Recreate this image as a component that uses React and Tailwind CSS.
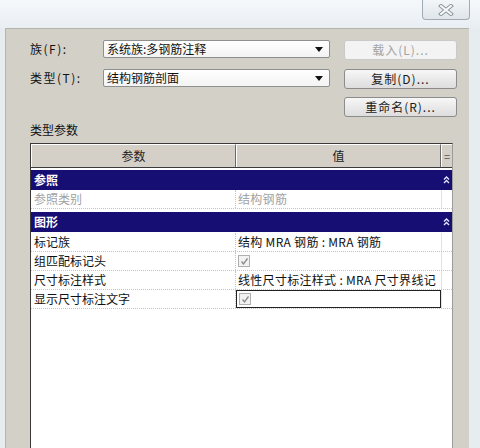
const FONT = { fontFamily: '"Noto Sans CJK SC", "Liberation Sans", sans-serif' };

function Arrow() {
  return (
    <svg width="8" height="5" viewBox="0 0 8 5" className="shrink-0">
      <path d="M0 0 L8 0 L4 5 Z" fill="#111" />
    </svg>
  );
}

function Combo({ text }) {
  return (
    <div className="w-[227px] h-[18px] border border-[#8e8f8f] rounded-[2px] bg-gradient-to-b from-[#ffffff] to-[#f3f3f3] flex items-center pl-[3px] pr-[6px]">
      <span className="flex-1 text-[12px] leading-none text-[#111]">{text}</span>
      <Arrow />
    </div>
  );
}

function Btn({ children, disabled }) {
  return (
    <div
      className={
        disabled
          ? "w-[113px] h-[20px] border border-[#c9c9c9] rounded-[3px] bg-[#f3f3f3] flex items-center justify-center text-[12px] tracking-[1px] text-[#a3a3a3] leading-none"
          : "w-[113px] h-[20px] border border-[#8c8c8c] rounded-[3px] bg-gradient-to-b from-[#f7f7f7] to-[#dddddd] flex items-center justify-center text-[12px] tracking-[1px] text-[#1a1a1a] leading-none"
      }
    >
      {children}
    </div>
  );
}

function Chevrons() {
  return (
    <svg width="7" height="8" viewBox="0 0 7 8">
      <path d="M1 3.5 L3.5 1 L6 3.5" stroke="#e8e8ff" strokeWidth="1.3" fill="none" />
      <path d="M1 7 L3.5 4.5 L6 7" stroke="#e8e8ff" strokeWidth="1.3" fill="none" />
    </svg>
  );
}

function Check() {
  return (
    <div className="w-[12px] h-[12px] border border-[#b0b0b0] bg-[#f2f2f2] flex items-center justify-center">
      <svg width="9" height="9" viewBox="0 0 9 9">
        <path d="M1.5 4.5 L3.5 7 L7.5 1.5" stroke="#8a8a8a" strokeWidth="1.3" fill="none" />
      </svg>
    </div>
  );
}

function Band({ label, className = "" }) {
  return (
    <div className={"h-[20px] bg-[#160e72] flex items-center " + className}>
      <span className="flex-1 pl-[3px] text-[12px] font-bold text-white leading-none">{label}</span>
      <div className="w-[12px] flex justify-center">
        <Chevrons />
      </div>
    </div>
  );
}

function Row({ name, value, gray, selected }) {
  return (
    <div className="h-[19px] flex border-b border-dotted border-[#c4c4c4] bg-white">
      <div
        className={
          "w-[205px] flex items-center pl-[3px] text-[12px] leading-none border-r border-dotted border-[#c4c4c4] " +
          (gray ? "text-[#a2a2a2]" : "text-[#111]")
        }
      >
        {name}
      </div>
      <div
        className={
          "w-[205px] flex items-center pl-[2px] text-[12px] tracking-[0.3px] leading-none whitespace-nowrap overflow-hidden " +
          (gray ? "text-[#a2a2a2] " : "text-[#111] ") +
          (selected ? "border border-[#222]" : "")
        }
      >
        {value}
      </div>
      <div className="flex-1 border-l border-[#e2e2e2]" />
    </div>
  );
}

export default function App() {
  return (
    <div className="w-[480px] h-[448px] overflow-hidden bg-[#e7ecf1] flex flex-col" style={FONT}>
      {/* title bar */}
      <div className="h-[28px] shrink-0 flex bg-gradient-to-b from-[#f5f8fb] to-[#e9eef3]">
        <div className="ml-auto mr-[10px] w-[48px] h-[20px] border border-t-0 border-[#a2abb4] rounded-b-[4px] bg-gradient-to-b from-[#f3f6f9] to-[#dfe5ea] flex items-center justify-center">
          <svg width="16" height="12" viewBox="0 0 16 12">
            <path d="M3 2 L13 10 M13 2 L3 10" stroke="#8b949c" strokeWidth="4" strokeLinecap="square" />
            <path d="M3 2 L13 10 M13 2 L3 10" stroke="#f7f9fb" strokeWidth="2" strokeLinecap="square" />
          </svg>
        </div>
      </div>

      {/* client */}
      <div className="flex-1 ml-[5px] mr-[11px] bg-[#d3d0c8] border-l border-t border-[#b4b4b0] flex flex-col pl-[24px] pt-[11px]">
        <div className="flex items-start">
          <div className="w-[73px] h-[18px] flex items-center text-[12px] tracking-[1.5px] text-[#111] leading-none">族(F):</div>
          <Combo text="系统族:多钢筋注释" />
          <div className="ml-[14px]">
            <Btn disabled>载入(L)...</Btn>
          </div>
        </div>
        <div className="flex items-start mt-[9px]">
          <div className="w-[73px] h-[18px] flex items-center text-[12px] tracking-[1.5px] text-[#111] leading-none">类型(T):</div>
          <Combo text="结构钢筋剖面" />
          <div className="ml-[14px]">
            <Btn>复制(D)...</Btn>
          </div>
        </div>
        <div className="flex mt-[8px] pl-[314px]">
          <Btn>重命名(R)...</Btn>
        </div>
        <div className="mt-[6px] h-[14px] flex items-center text-[12px] text-[#111] leading-none">类型参数</div>

        {/* table */}
        <div className="mt-[6px] w-[423px] flex-1 bg-white border-l border-t border-[#3a3a3a] border-r border-r-[#9c9c9c] flex flex-col">
          <div className="h-[24px] flex bg-[#d4d0c8] border-b border-[#3a3a3a]">
            <div className="w-[205px] flex items-center justify-center text-[12px] text-[#222] border-r border-[#6a6a6a] border-l border-l-white border-t border-t-white">
              参数
            </div>
            <div className="w-[205px] flex items-center justify-center text-[12px] text-[#222] border-r border-[#6a6a6a] border-l border-l-white border-t border-t-white">
              值
            </div>
            <div className="flex-1 flex items-center justify-center text-[11px] text-[#555] border-l border-l-white border-t border-t-white">
              =
            </div>
          </div>
          <div className="h-[2px]" />
          <Band label="参照" />
          <Row name="参照类别" value="结构钢筋" gray />
          <Band label="图形" className="mt-[3px] mb-[1px]" />
          <Row name="标记族" value="结构 MRA 钢筋 : MRA 钢筋" />
          <Row name="组匹配标记头" value={<Check />} />
          <Row name="尺寸标注样式" value="线性尺寸标注样式 : MRA 尺寸界线记" />
          <Row name="显示尺寸标注文字" value={<Check />} selected />
        </div>
      </div>
    </div>
  );
}
